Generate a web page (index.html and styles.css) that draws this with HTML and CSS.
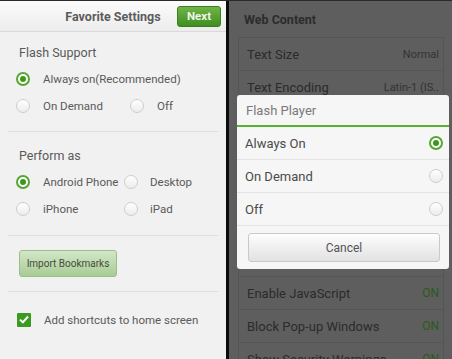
FILE: index.html
```html
<!DOCTYPE html>
<html>
<head>
<meta charset="utf-8">
<link rel="stylesheet" href="styles.css">
</head>
<body>
<div class="screens">
  <div class="left">
    <div class="header">
      <span></span>
      <span class="title">Favorite Settings</span>
      <span class="next-wrap"><span class="next">Next</span></span>
    </div>
    <div class="section s1">
      <div class="label">Flash Support</div>
      <div class="row"><span class="radio on"></span><span>Always on(Recommended)</span></div>
      <div class="row grid-flash">
        <div class="opt"><span class="radio"></span><span>On Demand</span></div>
        <div class="opt"><span class="radio"></span><span>Off</span></div>
      </div>
    </div>
    <div class="divider"></div>
    <div class="section s2">
      <div class="label">Perform as</div>
      <div class="row grid-perf">
        <div class="opt"><span class="radio on"></span><span>Android Phone</span></div>
        <div class="opt"><span class="radio"></span><span>Desktop</span></div>
      </div>
      <div class="row grid-perf">
        <div class="opt"><span class="radio"></span><span>iPhone</span></div>
        <div class="opt"><span class="radio"></span><span>iPad</span></div>
      </div>
    </div>
    <div class="divider"></div>
    <div class="section s3">
      <span class="import">Import Bookmarks</span>
    </div>
    <div class="divider"></div>
    <div class="section s4">
      <div class="row check-row">
        <span class="check"><svg width="10" height="9" viewBox="0 0 10 9"><path d="M1 4.6 L3.8 7.3 L9 1.5" fill="none" stroke="#fff" stroke-width="2"/></svg></span>
        <span>Add shortcuts to home screen</span>
      </div>
    </div>
  </div>
  <div class="sep"></div>
  <div class="right">
    <div class="rtitle">Web Content</div>
    <div class="list">
      <div class="item"><span>Text Size</span><span class="val">Normal</span></div>
      <div class="item"><span>Text Encoding</span><span class="val">Latin-1 (IS..</span></div>
      <div class="item"></div>
      <div class="item"></div>
      <div class="item"></div>
      <div class="item"></div>
      <div class="item tall"></div>
      <div class="item"><span>Enable JavaScript</span><span class="val on">ON</span></div>
      <div class="item"><span>Block Pop-up Windows</span><span class="val on">ON</span></div>
      <div class="item"><span>Show Security Warnings</span><span class="val on">ON</span></div>
    </div>
    <div class="dialog">
      <div class="dhead">Flash Player</div>
      <div class="dopt"><span>Always On</span><span class="radio on"></span></div>
      <div class="dopt"><span>On Demand</span><span class="radio"></span></div>
      <div class="dopt"><span>Off</span><span class="radio"></span></div>
      <div class="dfoot"><span class="cancel">Cancel</span></div>
    </div>
  </div>
</div>
</body>
</html>
```
FILE: styles.css
```css
html, body { margin: 0; padding: 0; }
body {
  width: 452px; height: 359px; overflow: hidden;
  font-family: Roboto, "Noto Sans", sans-serif;
  background: #111;
}
.screens {
  display: flex; height: 358px; border-top: 1px solid #2a2a2a;
}
.left {
  width: 226px; background: #f1f1f1; display: flex; flex-direction: column;
}
.sep { width: 3px; background: #0c0c0c; }
.right {
  flex: 1; background: #5e5e5e; position: relative; overflow: hidden;
}

/* left header */
.header {
  height: 30px; display: grid; grid-template-columns: 1fr auto 1fr;
  align-items: center;
  background: linear-gradient(#fbfbfb, #ececec);
  border-bottom: 1px solid #d9d9d9;
}
.title { font-weight: bold; font-size: 12.5px; color: #5c5c5c; }
.next-wrap { display: flex; justify-content: flex-end; padding-right: 5px; }
.next {
  width: 44px; height: 21px; box-sizing: border-box;
  display: flex; align-items: center; justify-content: center;
  background: linear-gradient(#70b447, #408e21);
  border: 1px solid #3b7d1f; border-radius: 3px;
  color: #eef6ea; font-weight: bold; font-size: 11.5px;
}

.section { padding-left: 16px; color: #5a5a5a; }
.s1 { padding-top: 11px; padding-bottom: 12px; }
.s2 { padding-top: 14px; padding-bottom: 13px; }
.s3 { padding-top: 14px; padding-bottom: 14px; padding-left: 19px; }
.s4 { padding-top: 14px; padding-left: 17px; }
.label { font-size: 12.5px; height: 20px; line-height: 20px; margin-bottom: 2px; padding-left: 3px; }
.row { height: 27px; display: flex; align-items: center; font-size: 11.5px; }
.row > .radio, .opt > .radio { margin-right: 13px; }
.opt { display: flex; align-items: center; }
.grid-flash { display: grid; grid-template-columns: 114px 1fr; }
.grid-perf { display: grid; grid-template-columns: 108px 1fr; }
.grid-perf .opt:nth-child(2) .radio { margin-right: 12px; }
.divider { height: 1px; background: #dedede; margin: 0 8px; }

.radio {
  width: 14px; height: 14px; box-sizing: border-box; border-radius: 50%;
  border: 1px solid #cdcdcd; background: linear-gradient(#ffffff, #ececec);
  flex: none; display: inline-block; position: relative;
}
.radio.on {
  border: 2px solid #58a632; background: #fff;
}
.radio.on::after {
  content: ""; position: absolute; left: 2px; top: 2px;
  width: 6px; height: 6px; border-radius: 50%; background: #3a9a1c;
}

.import {
  display: inline-flex; align-items: center; justify-content: center;
  width: 98px; height: 27px; box-sizing: border-box;
  background: linear-gradient(#d3e7c8, #a8cb94);
  border: 1px solid #9cbf89; border-radius: 3px;
  font-size: 10px; color: #434d3e;
}
.check-row { font-size: 11.5px; }
.check {
  width: 14px; height: 14px; background: #3b9b20; border-radius: 1px;
  display: inline-flex; align-items: center; justify-content: center;
  margin-right: 13px;
}

/* right */
.rtitle {
  font-weight: bold; font-size: 12.5px; color: #2c2c2c;
  padding: 11px 0 0 15px; height: 25px; box-sizing: border-box;
}
.list {
  margin: 11px 8px 0 9px; border: 1px solid #555; border-bottom: 0;
}
.item {
  height: 33px; box-sizing: border-box; border-bottom: 1px solid #555;
  display: flex; align-items: center; justify-content: space-between;
  padding: 0 4px 0 8px; font-size: 13px; color: #2b2b2b;
}
.item.tall { height: 41px; }
.val { font-size: 11px; color: #333; }
.val.on { color: #2c5a1c; font-size: 12px; }

.dialog {
  position: absolute; left: 8px; top: 94px; width: 212px;
  background: #f6f6f6; border-radius: 3px;
}
.dhead {
  height: 32px; box-sizing: border-box; padding-left: 9px;
  display: flex; align-items: center; font-size: 13px; color: #7a7a7a;
  border-bottom: 2px solid #5ab131;
}
.dopt {
  height: 33px; box-sizing: border-box; border-bottom: 1px solid #e3e3e3;
  display: flex; align-items: center; justify-content: space-between;
  padding: 0 6px 0 8px; font-size: 13px; color: #4a4a4a;
}
.dfoot { padding: 7px 9px 7px 11px; }
.cancel {
  display: flex; align-items: center; justify-content: center;
  height: 29px; box-sizing: border-box;
  background: linear-gradient(#fdfdfd, #e2e2e2);
  border: 1px solid #c9c9c9; border-radius: 3px;
  font-size: 12px; color: #555;
}
```
